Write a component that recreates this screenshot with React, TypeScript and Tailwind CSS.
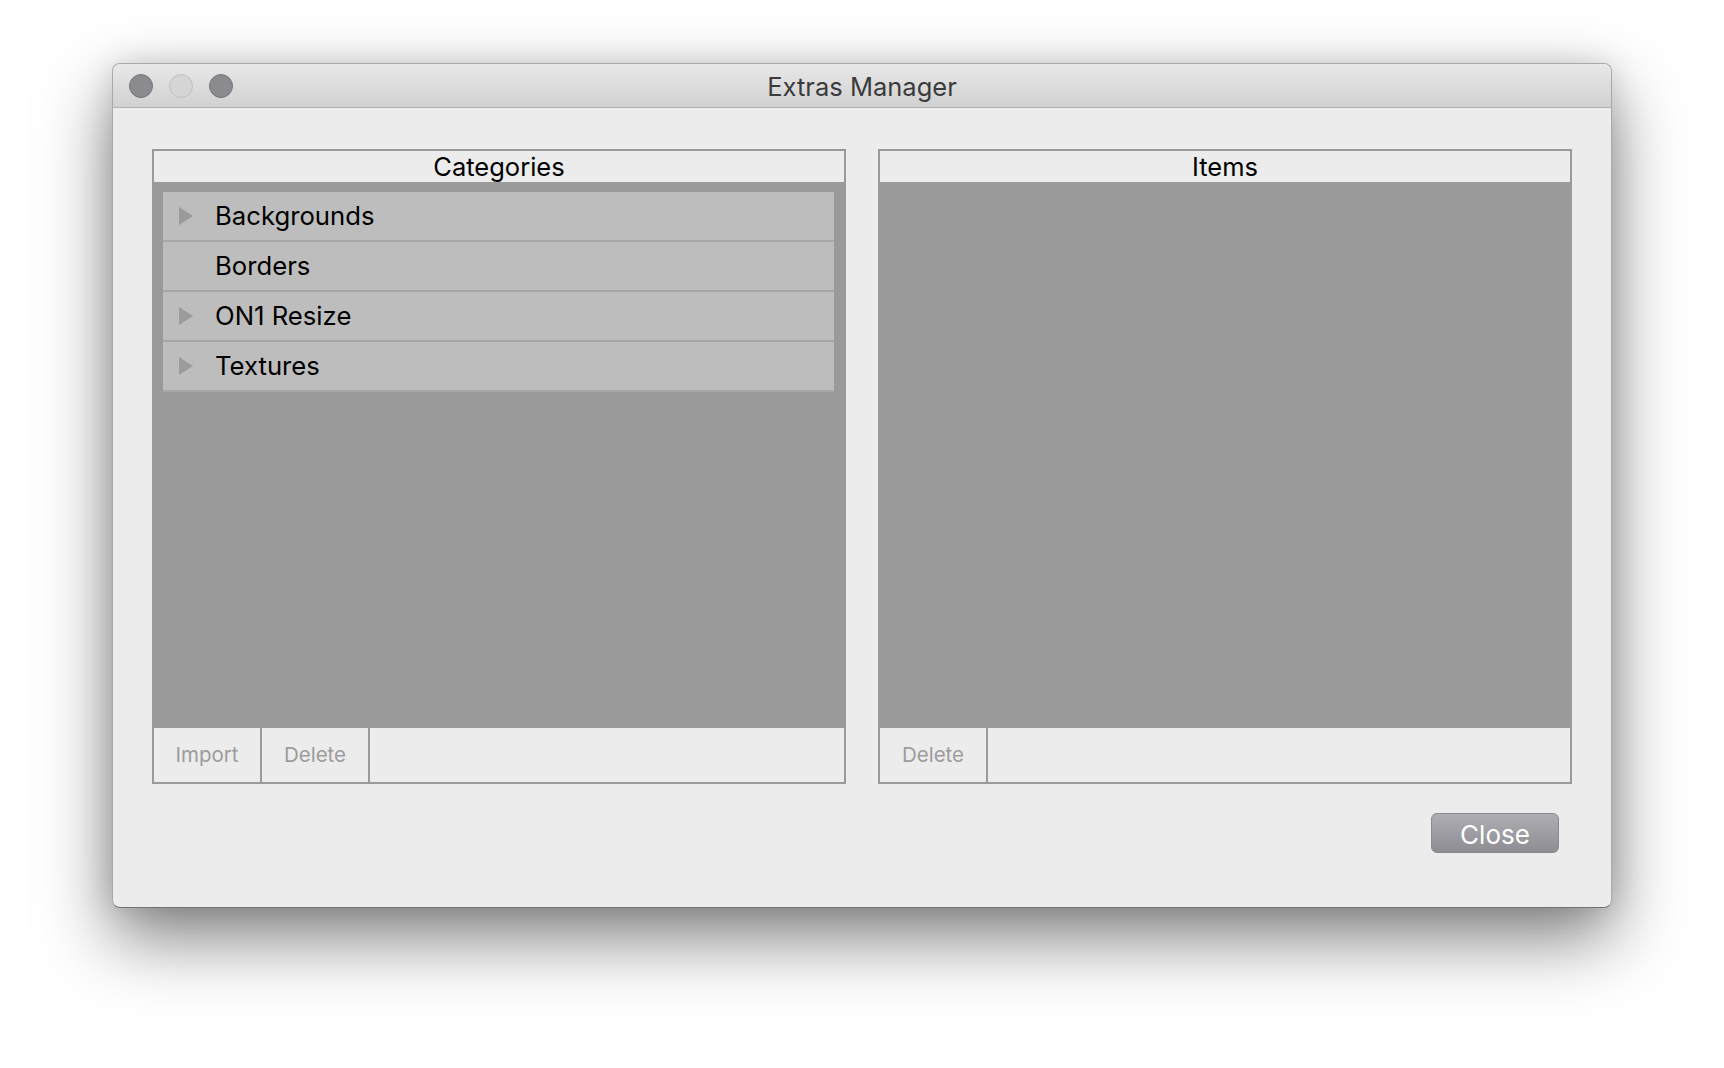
import { useState } from 'react';

const categories = [
  { name: 'Backgrounds', expandable: true },
  { name: 'Borders', expandable: false },
  { name: 'ON1 Resize', expandable: true },
  { name: 'Textures', expandable: true },
];

function TrafficLight({ light }: { light?: boolean }) {
  return (
    <span
      className={
        light
          ? 'size-[24px] rounded-full border border-[#c0bfc1] bg-[#d6d5d6]'
          : 'size-[24px] rounded-full border border-[#77767b] bg-[#8b8a8f]'
      }
    />
  );
}

function Disclosure() {
  return (
    <svg width="14" height="18" viewBox="0 0 14 18" className="shrink-0">
      <path d="M0 0 L14 9 L0 18 Z" fill="#9b9b9b" />
    </svg>
  );
}

function ToolButton({ label }: { label: string }) {
  return (
    <button className="flex w-[108px] items-center justify-center border-r-2 border-[#9a9a9a] text-[20.5px] text-[#9c9c9c]">
      {label}
    </button>
  );
}

function Panel({
  title,
  actions,
  children,
}: {
  title: string;
  actions: string[];
  children?: React.ReactNode;
}) {
  return (
    <div className="flex h-[635px] w-[694px] flex-col border-2 border-[#9a9a9a]">
      {/* Header */}
      <div className="flex h-[31px] items-center justify-center bg-[#ececec] pt-[1px] text-[25.5px] leading-none text-black">
        {title}
      </div>

      {/* List */}
      <div className="flex-1 bg-[#9a9a9a] pl-[9px] pr-[10px] pt-[10px]">{children}</div>

      {/* Toolbar */}
      <div className="flex h-[54px] bg-[#ececec]">
        {actions.map((a) => (
          <ToolButton key={a} label={a} />
        ))}
      </div>
    </div>
  );
}

export default function App() {
  const [selected, setSelected] = useState<string | null>(null);

  return (
    <div
      className="flex h-[1068px] w-full justify-center bg-white pt-[63px]"
      style={{ fontFamily: 'Inter, "Noto Sans", sans-serif' }}
    >
      <div className="flex h-[845px] w-[1500px] flex-col overflow-hidden rounded-[8px] border border-[#a9a9a9] border-b-[#727272] bg-[#ececec] shadow-[0_30px_70px_rgba(0,0,0,0.5),0_0_30px_rgba(0,0,0,0.12)]">
        {/* Title bar */}
        <div className="relative flex h-[44px] shrink-0 items-center justify-center border-b border-[#b3b3b3] bg-gradient-to-b from-[#e9e8e9] to-[#d2d1d2]">
          <div className="absolute left-[16px] top-[10px] flex gap-[16px]">
            <TrafficLight />
            <TrafficLight light />
            <TrafficLight />
          </div>
          <span className="pt-[3px] text-[25.5px] text-[#3b3b3b]">Extras Manager</span>
        </div>

        {/* Body */}
        <div className="flex flex-1 flex-col px-[39px] pt-[41px]">
          <div className="flex gap-[32px]">
            <Panel title="Categories" actions={['Import', 'Delete']}>
              {categories.map((c) => (
                <div
                  key={c.name}
                  onClick={() => setSelected(c.name)}
                  className={`flex h-[50px] items-center border-b-2 border-[#a7a7a7] pl-[16px] ${
                    selected === c.name ? 'bg-[#c6c6c6]' : 'bg-[#bdbdbd]'
                  }`}
                >
                  <span className="flex w-[36px]">{c.expandable && <Disclosure />}</span>
                  <span className="pt-[1px] text-[25.7px] text-black">{c.name}</span>
                </div>
              ))}
            </Panel>
            <Panel title="Items" actions={['Delete']} />
          </div>

          <div className="flex justify-end pr-[13px] pt-[29px]">
            <button className="h-[40px] w-[128px] rounded-[6px] border border-[#8a898e] bg-gradient-to-b from-[#afaeb3] to-[#8e8d93] pt-[1px] text-[26px] text-white">
              Close
            </button>
          </div>
        </div>
      </div>
    </div>
  );
}
